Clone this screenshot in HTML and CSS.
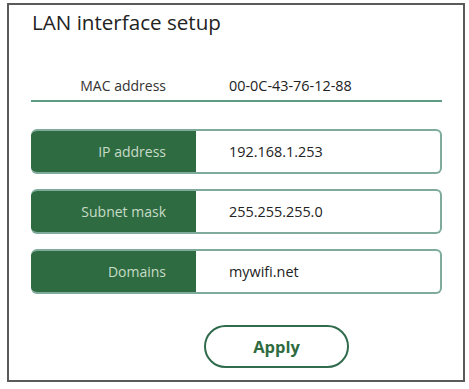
FILE: index.html
```html
<!DOCTYPE html>
<html lang="en">
<head>
    <meta charset="UTF-8">
    <meta name="viewport" content="width=device-width, initial-scale=1.0">
    <title>LAN interface setup</title>
    <link rel="stylesheet" href="styles.css">
</head>
<body>
    <div class="panel">
        <h1 class="title">LAN interface setup</h1>

        <div class="fields">
            <!-- Строка только для чтения -->
            <div class="mac-row">
                <span class="label">MAC address</span>
                <span class="value">00-0C-43-76-12-88</span>
            </div>

            <div class="field">
                <span class="label">IP address</span>
                <span class="value">192.168.1.253</span>
            </div>
            <div class="field">
                <span class="label">Subnet mask</span>
                <span class="value">255.255.255.0</span>
            </div>
            <div class="field">
                <span class="label">Domains</span>
                <span class="value">mywifi.net</span>
            </div>
        </div>

        <div class="actions">
            <a href="#" class="btn-apply">Apply</a>
        </div>
    </div>
</body>
</html>
```
FILE: styles.css
```css
* {
    margin: 0;
    padding: 0;
    box-sizing: border-box;
}
body {
    font-family: 'Open Sans', 'Noto Sans', sans-serif;
    background: #fff;
    width: 469px;
    height: 389px;
    overflow: hidden;
}
.panel {
    margin: 3px 0 0 7px;
    width: 458px;
    height: 379px;
    border: 2px solid #5a5a5a;
    background: #fff;
}
.title {
    font-weight: 400;
    font-size: 20.6px;
    line-height: 28px;
    color: #222;
    padding: 3px 0 0 23px;
}
.fields {
    margin: 35px 0 0 22px;
    width: 411px;
}
.mac-row {
    display: flex;
    align-items: center;
    height: 31px;
    border-bottom: 2px solid #5b9c82;
}
.mac-row .label {
    color: #333;
}
.label {
    width: 165px;
    padding-right: 30px;
    text-align: right;
    font-size: 14px;
}
.value {
    padding-left: 33px;
    font-size: 14.4px;
    color: #222;
}
.field {
    display: flex;
    align-items: center;
    height: 45px;
    border: 2px solid #7fab9c;
    border-left: none;
    border-radius: 6px;
    overflow: hidden;
    margin-top: 15px;
}
.mac-row + .field {
    margin-top: 27px;
}
.field .label {
    align-self: stretch;
    display: flex;
    align-items: center;
    justify-content: flex-end;
    background: #2f6b40;
    color: #c6dbc8;
    margin: -2px 0;
    border-radius: 6px 0 0 6px;
}
.actions {
    display: flex;
    margin-top: 31px;
    padding-left: 195px;
}
.btn-apply {
    display: flex;
    align-items: center;
    justify-content: center;
    width: 145px;
    height: 43px;
    border: 2px solid #2f6b4c;
    border-radius: 22px;
    color: #2f6b40;
    font-weight: 700;
    font-size: 16.5px;
    text-decoration: none;
}
```
